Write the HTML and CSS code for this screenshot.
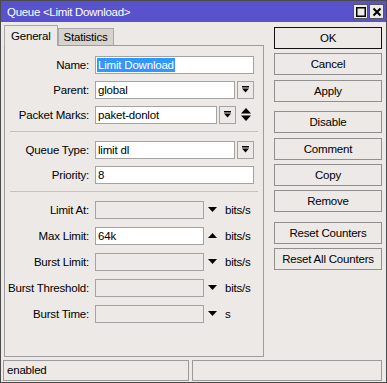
FILE: index.html
```html
<!DOCTYPE html>
<html lang="en">
<head>
  <meta charset="UTF-8" />
  <title>Queue &lt;Limit Download&gt;</title>
  <link rel="stylesheet" href="styles.css">
</head>
<body>
  <div class="window">
    <div class="titlebar">
      <span class="title">Queue &lt;Limit Download&gt;</span>
      <div class="wbtns">
        <span class="wbtn">
          <svg width="10" height="10" viewBox="0 0 10 10"><rect x="0.75" y="0.75" width="8.5" height="8.5" fill="none" stroke="#000" stroke-width="1.5"/></svg>
        </span>
        <span class="wbtn">
          <svg width="10" height="10" viewBox="0 0 10 10"><path d="M1.5 1.5 L8.5 8.5 M8.5 1.5 L1.5 8.5" stroke="#000" stroke-width="2"/></svg>
        </span>
      </div>
    </div>

    <div class="main">
      <div class="left">
        <div class="tabs">
          <span class="tab active">General</span>
          <span class="tab">Statistics</span>
        </div>
        <div class="panel">
          <div class="row">
            <label>Name:</label>
            <span class="input w-full"><span class="sel">Limit Download</span></span>
          </div>
          <div class="row">
            <label>Parent:</label>
            <span class="input w-drop">global</span>
            <span class="dropbtn"><svg width="7" height="7" viewBox="0 0 7 7"><rect x="0" y="0" width="7" height="1.5" fill="#000"/><polygon points="0,2.5 7,2.5 3.5,6.5" fill="#000"/></svg></span>
          </div>
          <div class="row">
            <label>Packet Marks:</label>
            <span class="input w-marks">paket-donlot</span>
            <span class="dropbtn"><svg width="7" height="7" viewBox="0 0 7 7"><rect x="0" y="0" width="7" height="1.5" fill="#000"/><polygon points="0,2.5 7,2.5 3.5,6.5" fill="#000"/></svg></span>
            <span class="updown"><svg width="10" height="13" viewBox="0 0 10 13"><polygon points="5,0 10,5.5 0,5.5" fill="#000"/><polygon points="0,7.5 10,7.5 5,13" fill="#000"/></svg></span>
          </div>

          <div class="sep"></div>

          <div class="row">
            <label>Queue Type:</label>
            <span class="input w-drop">limit dl</span>
            <span class="dropbtn"><svg width="7" height="7" viewBox="0 0 7 7"><rect x="0" y="0" width="7" height="1.5" fill="#000"/><polygon points="0,2.5 7,2.5 3.5,6.5" fill="#000"/></svg></span>
          </div>
          <div class="row">
            <label>Priority:</label>
            <span class="input w-full">8</span>
          </div>

          <div class="sep"></div>

          <div class="row rate">
            <label>Limit At:</label>
            <span class="input w-rate off"></span>
            <span class="arrow"><svg width="9" height="5" viewBox="0 0 9 5"><polygon points="0,0 9,0 4.5,5" fill="#000"/></svg></span>
            <span class="unit">bits/s</span>
          </div>
          <div class="row rate">
            <label>Max Limit:</label>
            <span class="input w-rate">64k</span>
            <span class="arrow"><svg width="9" height="5" viewBox="0 0 9 5"><polygon points="4.5,0 9,5 0,5" fill="#000"/></svg></span>
            <span class="unit">bits/s</span>
          </div>
          <div class="row rate">
            <label>Burst Limit:</label>
            <span class="input w-rate off"></span>
            <span class="arrow"><svg width="9" height="5" viewBox="0 0 9 5"><polygon points="0,0 9,0 4.5,5" fill="#000"/></svg></span>
            <span class="unit">bits/s</span>
          </div>
          <div class="row rate">
            <label>Burst Threshold:</label>
            <span class="input w-rate off"></span>
            <span class="arrow"><svg width="9" height="5" viewBox="0 0 9 5"><polygon points="0,0 9,0 4.5,5" fill="#000"/></svg></span>
            <span class="unit">bits/s</span>
          </div>
          <div class="row rate">
            <label>Burst Time:</label>
            <span class="input w-rate off"></span>
            <span class="arrow"><svg width="9" height="5" viewBox="0 0 9 5"><polygon points="0,0 9,0 4.5,5" fill="#000"/></svg></span>
            <span class="unit">s</span>
          </div>
        </div>
      </div>

      <div class="buttons">
        <button class="default">OK</button>
        <button>Cancel</button>
        <button>Apply</button>
        <button class="group">Disable</button>
        <button>Comment</button>
        <button>Copy</button>
        <button>Remove</button>
        <button class="group">Reset Counters</button>
        <button>Reset All Counters</button>
      </div>
    </div>

    <div class="status">
      <div class="cell first">enabled</div>
      <div class="cell second"></div>
    </div>
  </div>
</body>
</html>
```

FILE: styles.css
```css
* {
  margin: 0; padding: 0; box-sizing: border-box;
  font-family: 'Liberation Sans', Arial, sans-serif;
}

html, body {
  width: 387px;
  height: 383px;
  background: #ece9e6;
  overflow: hidden;
}

.window {
  width: 387px;
  height: 383px;
  border: 1px solid #4a4a4a;
  background: #ece9e6;
  display: flex;
  flex-direction: column;
  font-size: 11.5px;
  letter-spacing: -0.2px;
  color: #000;
}

/* barra de título */
.titlebar {
  height: 21px;
  background: #5852cd;
  display: flex;
  align-items: center;
  justify-content: space-between;
  padding: 0 2px 0 6px;
}

.title {
  color: #fff;
  font-size: 11.5px;
  letter-spacing: -0.3px;
}

.wbtns {
  display: flex;
  gap: 1px;
}

.wbtn {
  width: 15px;
  height: 15px;
  background: #ece9e6;
  border: 1px solid #555;
  display: flex;
  align-items: center;
  justify-content: center;
}

/* área principal */
.main {
  display: flex;
  height: 336px;
}

.left {
  padding-left: 3px;
  width: 265px;
  display: flex;
  flex-direction: column;
}

.tabs {
  height: 23px;
  display: flex;
  align-items: flex-end;
}

.tab {
  height: 17px;
  padding: 0 5px;
  line-height: 16px;
  background: #d6d3ce;
  border: 1px solid #a8a8a8;
  border-bottom: none;
}

.tab.active {
  height: 21px;
  line-height: 20px;
  padding: 0 6px;
  background: #ece9e6;
  position: relative;
  top: 1px;
  z-index: 1;
}

.panel {
  width: 260px;
  height: 312px;
  border: 1px solid #9d9d9d;
  padding-top: 10px;
}

.row {
  display: flex;
  align-items: center;
  height: 17px;
  margin-bottom: 8px;
}

.row.rate {
  margin-bottom: 9px;
}

.row label {
  width: 85px;
  text-align: right;
  padding-right: 1px;
  margin-right: 5px;
}

.input {
  height: 18px;
  border: 1px solid #a3a3a3;
  background: #fff;
  padding: 0 2px;
  line-height: 16px;
  white-space: nowrap;
  overflow: hidden;
}

.input.off {
  background: #ece9e6;
}

.w-full { width: 159px; }
.w-drop { width: 140px; }
.w-marks { width: 122px; }
.w-rate { width: 109px; }

.sel {
  background: #3297fd;
  color: #fff;
  display: inline-block;
  line-height: 14px;
  padding: 0 1px;
  margin-left: -1px;
}

.dropbtn {
  width: 17px;
  height: 18px;
  margin-left: 2px;
  border: 1px solid #a3a3a3;
  background: #ece9e6;
  display: flex;
  align-items: center;
  justify-content: center;
}

.updown {
  margin-left: 5px;
  display: flex;
  align-items: center;
}

.arrow {
  margin-left: 4px;
  width: 9px;
  display: flex;
}

.unit {
  margin-left: 8px;
}

.sep {
  height: 1px;
  background: #c4c2be;
  margin: 1px 5px 9px 5px;
}

/* botões */
.buttons {
  margin-left: 8px;
  padding-top: 5px;
  display: flex;
  flex-direction: column;
  gap: 4.4px;
}

button {
  width: 108px;
  height: 22px;
  background: #ece9e6;
  border: 1px solid #8f8f8f;
  font-size: 11.5px;
  letter-spacing: -0.2px;
  color: #000;
}

button.default {
  border: 1px solid #111;
}

button.group {
  margin-top: 5px;
}

/* barra de status */
.status {
  flex: 1;
  display: flex;
  gap: 3px;
  padding: 2px 4px 1px 2px;
}

.cell {
  border: 1px solid #9a9a9a;
  height: 21px;
  line-height: 19px;
  padding-left: 3px;
}

.cell.first { width: 186px; }
.cell.second { flex: 1; }
```
